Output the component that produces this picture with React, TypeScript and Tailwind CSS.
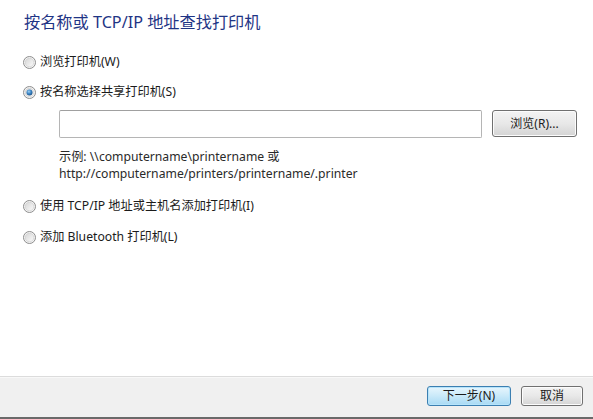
import React from "react";

function Radio({ checked }: { checked?: boolean }) {
  return (
    <svg width="13" height="13" viewBox="0 0 13 13" className="shrink-0">
      <defs>
        <linearGradient id={checked ? "rg1" : "rg0"} x1="0" y1="0" x2="1" y2="1">
          <stop offset="0" stopColor="#d6d6d6" />
          <stop offset="1" stopColor="#fbfbfb" />
        </linearGradient>
        <radialGradient id="dot" cx="0.4" cy="0.35" r="0.7">
          <stop offset="0" stopColor="#9fd2f5" />
          <stop offset="0.5" stopColor="#3d86c6" />
          <stop offset="1" stopColor="#1b4f82" />
        </radialGradient>
      </defs>
      <circle cx="6.5" cy="6.5" r="6" fill="#f4f4f4" stroke="#8d8d8d" strokeWidth="1" />
      <circle cx="6.5" cy="6.5" r="4.3" fill={`url(#${checked ? "rg1" : "rg0"})`} stroke="#c9c9c9" strokeWidth="0.6" />
      {checked && <circle cx="6.5" cy="6.5" r="3" fill="url(#dot)" />}
    </svg>
  );
}

export default function App() {
  return (
    <div className="w-[593px] h-[419px] flex flex-col bg-white font-['Noto_Sans','Noto_Sans_CJK_SC',sans-serif] text-[12.2px] text-[#1b1b1b] overflow-hidden">
      <div className="flex-1 flex flex-col">
        <div className="pl-[24px] pt-[11px] h-[33px] text-[16.2px] leading-[22px] text-[#1f3585]">
          按名称或 TCP/IP 地址查找打印机
        </div>
        <div className="pl-[23px] mt-[19px] flex flex-col">
          <div className="h-[20px] flex items-center gap-[4px]">
            <Radio />
            <span>浏览打印机(W)</span>
          </div>
          <div className="h-[20px] mt-[10px] flex items-center gap-[4px]">
            <Radio checked />
            <span>按名称选择共享打印机(S)</span>
          </div>
          <div className="pl-[36px] mt-[8px] flex items-start gap-[10px]">
            <div className="w-[423px] h-[28px] border border-[#b5b5b5] border-t-[#a0a0a0] bg-white rounded-[2px]" />
            <button className="w-[85px] h-[27px] rounded-[3px] border border-[#707070] bg-gradient-to-b from-[#f3f3f3] via-[#e8e8e8] to-[#d4d4d4] shadow-[inset_0_0_0_1px_#fcfcfc] text-[12px] text-[#1b1b1b]">
              浏览(R)...
            </button>
          </div>
          <div className="pl-[36px] mt-[10px] leading-[17px] text-[#2a2a2a]">
            <div>示例: \\computername\printername 或</div>
            <div>http://computername/printers/printername/.printer</div>
          </div>
          <div className="h-[20px] mt-[14px] flex items-center gap-[4px]">
            <Radio />
            <span>使用 TCP/IP 地址或主机名添加打印机(I)</span>
          </div>
          <div className="h-[20px] mt-[11px] flex items-center gap-[4px]">
            <Radio />
            <span>添加 Bluetooth 打印机(L)</span>
          </div>
        </div>
      </div>
      <div className="h-[43px] bg-[#f0f0f0] border-t border-[#dcdcdc] shadow-[inset_0_1px_0_#f8f8f8] border-b-2 border-b-[#6a6a6a] flex items-start justify-end pr-[10px] pt-[9px] gap-[10px]">
        <button className="w-[84px] h-[20px] rounded-[3px] border border-[#3c7fb1] bg-gradient-to-b from-[#e8f6fd] via-[#c9e9f9] to-[#a7d9f4] shadow-[inset_0_0_0_1px_#b6e4fb] text-[12px] leading-[18px] text-[#1b1b1b]">
          下一步(N)
        </button>
        <button className="w-[62px] h-[20px] rounded-[3px] border border-[#707070] bg-gradient-to-b from-[#f3f3f3] via-[#e8e8e8] to-[#d4d4d4] shadow-[inset_0_0_0_1px_#fcfcfc] text-[12px] leading-[18px] text-[#1b1b1b]">
          取消
        </button>
      </div>
    </div>
  );
}
